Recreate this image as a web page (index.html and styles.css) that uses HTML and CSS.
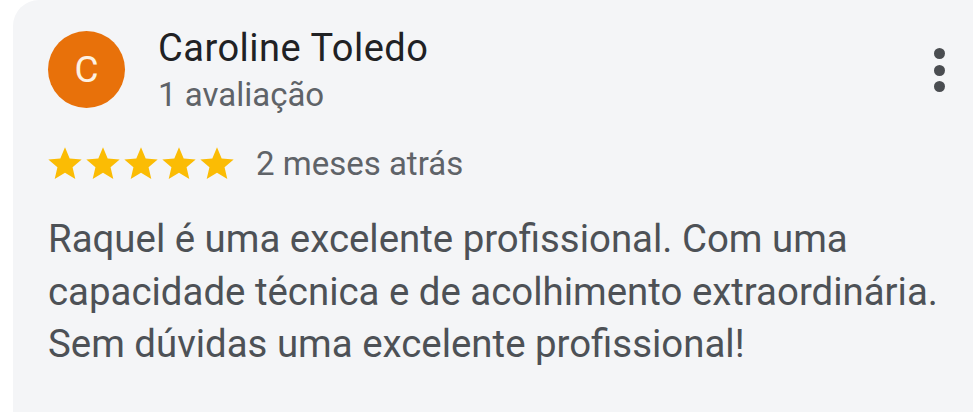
FILE: index.html
```html
<!DOCTYPE html>
<html lang="pt">

<head>
    <meta charset="UTF-8">
    <meta name="viewport" content="width=device-width, initial-scale=1.0">
    <title>Avaliação</title>
    <link rel="stylesheet" href="styles.css">
</head>

<body>
    <div class="review">
        <div class="review-head">
            <div class="avatar">C</div>
            <div class="author">
                <div class="author-name">Caroline Toledo</div>
                <div class="author-meta">1 avaliação</div>
            </div>
            <button class="more" type="button" aria-label="Mais opções">
                <span></span><span></span><span></span>
            </button>
        </div>

        <div class="rating">
            <div class="stars">
                <svg viewBox="0 0 24 24"><path d="M12 17.27L18.18 21l-1.64-7.03L22 9.24l-7.19-.61L12 2 9.19 8.63 2 9.24l5.46 4.73L5.82 21z"/></svg>
                <svg viewBox="0 0 24 24"><path d="M12 17.27L18.18 21l-1.64-7.03L22 9.24l-7.19-.61L12 2 9.19 8.63 2 9.24l5.46 4.73L5.82 21z"/></svg>
                <svg viewBox="0 0 24 24"><path d="M12 17.27L18.18 21l-1.64-7.03L22 9.24l-7.19-.61L12 2 9.19 8.63 2 9.24l5.46 4.73L5.82 21z"/></svg>
                <svg viewBox="0 0 24 24"><path d="M12 17.27L18.18 21l-1.64-7.03L22 9.24l-7.19-.61L12 2 9.19 8.63 2 9.24l5.46 4.73L5.82 21z"/></svg>
                <svg viewBox="0 0 24 24"><path d="M12 17.27L18.18 21l-1.64-7.03L22 9.24l-7.19-.61L12 2 9.19 8.63 2 9.24l5.46 4.73L5.82 21z"/></svg>
            </div>
            <span class="date">2 meses atrás</span>
        </div>

        <p class="review-text">Raquel é uma excelente profissional. Com uma capacidade técnica e de acolhimento extraordinária. Sem dúvidas uma excelente profissional!</p>
    </div>
</body>

</html>
```

FILE: styles.css
```css
body {
    margin: 0;
    background: #ffffff;
    font-family: Roboto, "Liberation Sans", sans-serif;
}
.review {
    margin-left: 13px;
    height: 412px;
    box-sizing: border-box;
    padding: 31px 0 0 35px;
    background: #f4f5f7;
    border-top-left-radius: 26px;
}
.review-head {
    display: flex;
    align-items: flex-start;
}
.avatar {
    width: 77px;
    height: 77px;
    border-radius: 50%;
    background: #e8710a;
    color: #fdf1e3;
    font-size: 37px;
    line-height: 77px;
    text-align: center;
    flex-shrink: 0;
}
.author {
    margin-left: 33px;
    flex: 1;
}
.author-name {
    font-size: 38px;
    letter-spacing: 0.5px;
    line-height: 40px;
    color: #202124;
    margin-top: -3px;
}
.author-meta {
    font-size: 33px;
    line-height: 40px;
    margin-top: 7px;
    color: #5f6368;
}
.more {
    display: flex;
    flex-direction: column;
    gap: 5.5px;
    margin: 17px 28px 0 0;
    padding: 0;
    border: 0;
    background: none;
}
.more span {
    width: 11px;
    height: 11px;
    border-radius: 50%;
    background: #4a4d51;
}
.rating {
    display: flex;
    align-items: center;
    margin-top: 29px;
}
.stars {
    display: flex;
    margin-left: -3px;
}
.stars svg {
    width: 40px;
    height: 40px;
    fill: #fbbc04;
    margin-right: -2px;
}
.date {
    margin-left: 21px;
    font-size: 33px;
    line-height: 40px;
    color: #5f6368;
}
.review-text {
    margin: 29px 0 0;
    max-width: 910px;
    font-size: 38.4px;
    line-height: 52.5px;
    color: #4d5156;
}
```
